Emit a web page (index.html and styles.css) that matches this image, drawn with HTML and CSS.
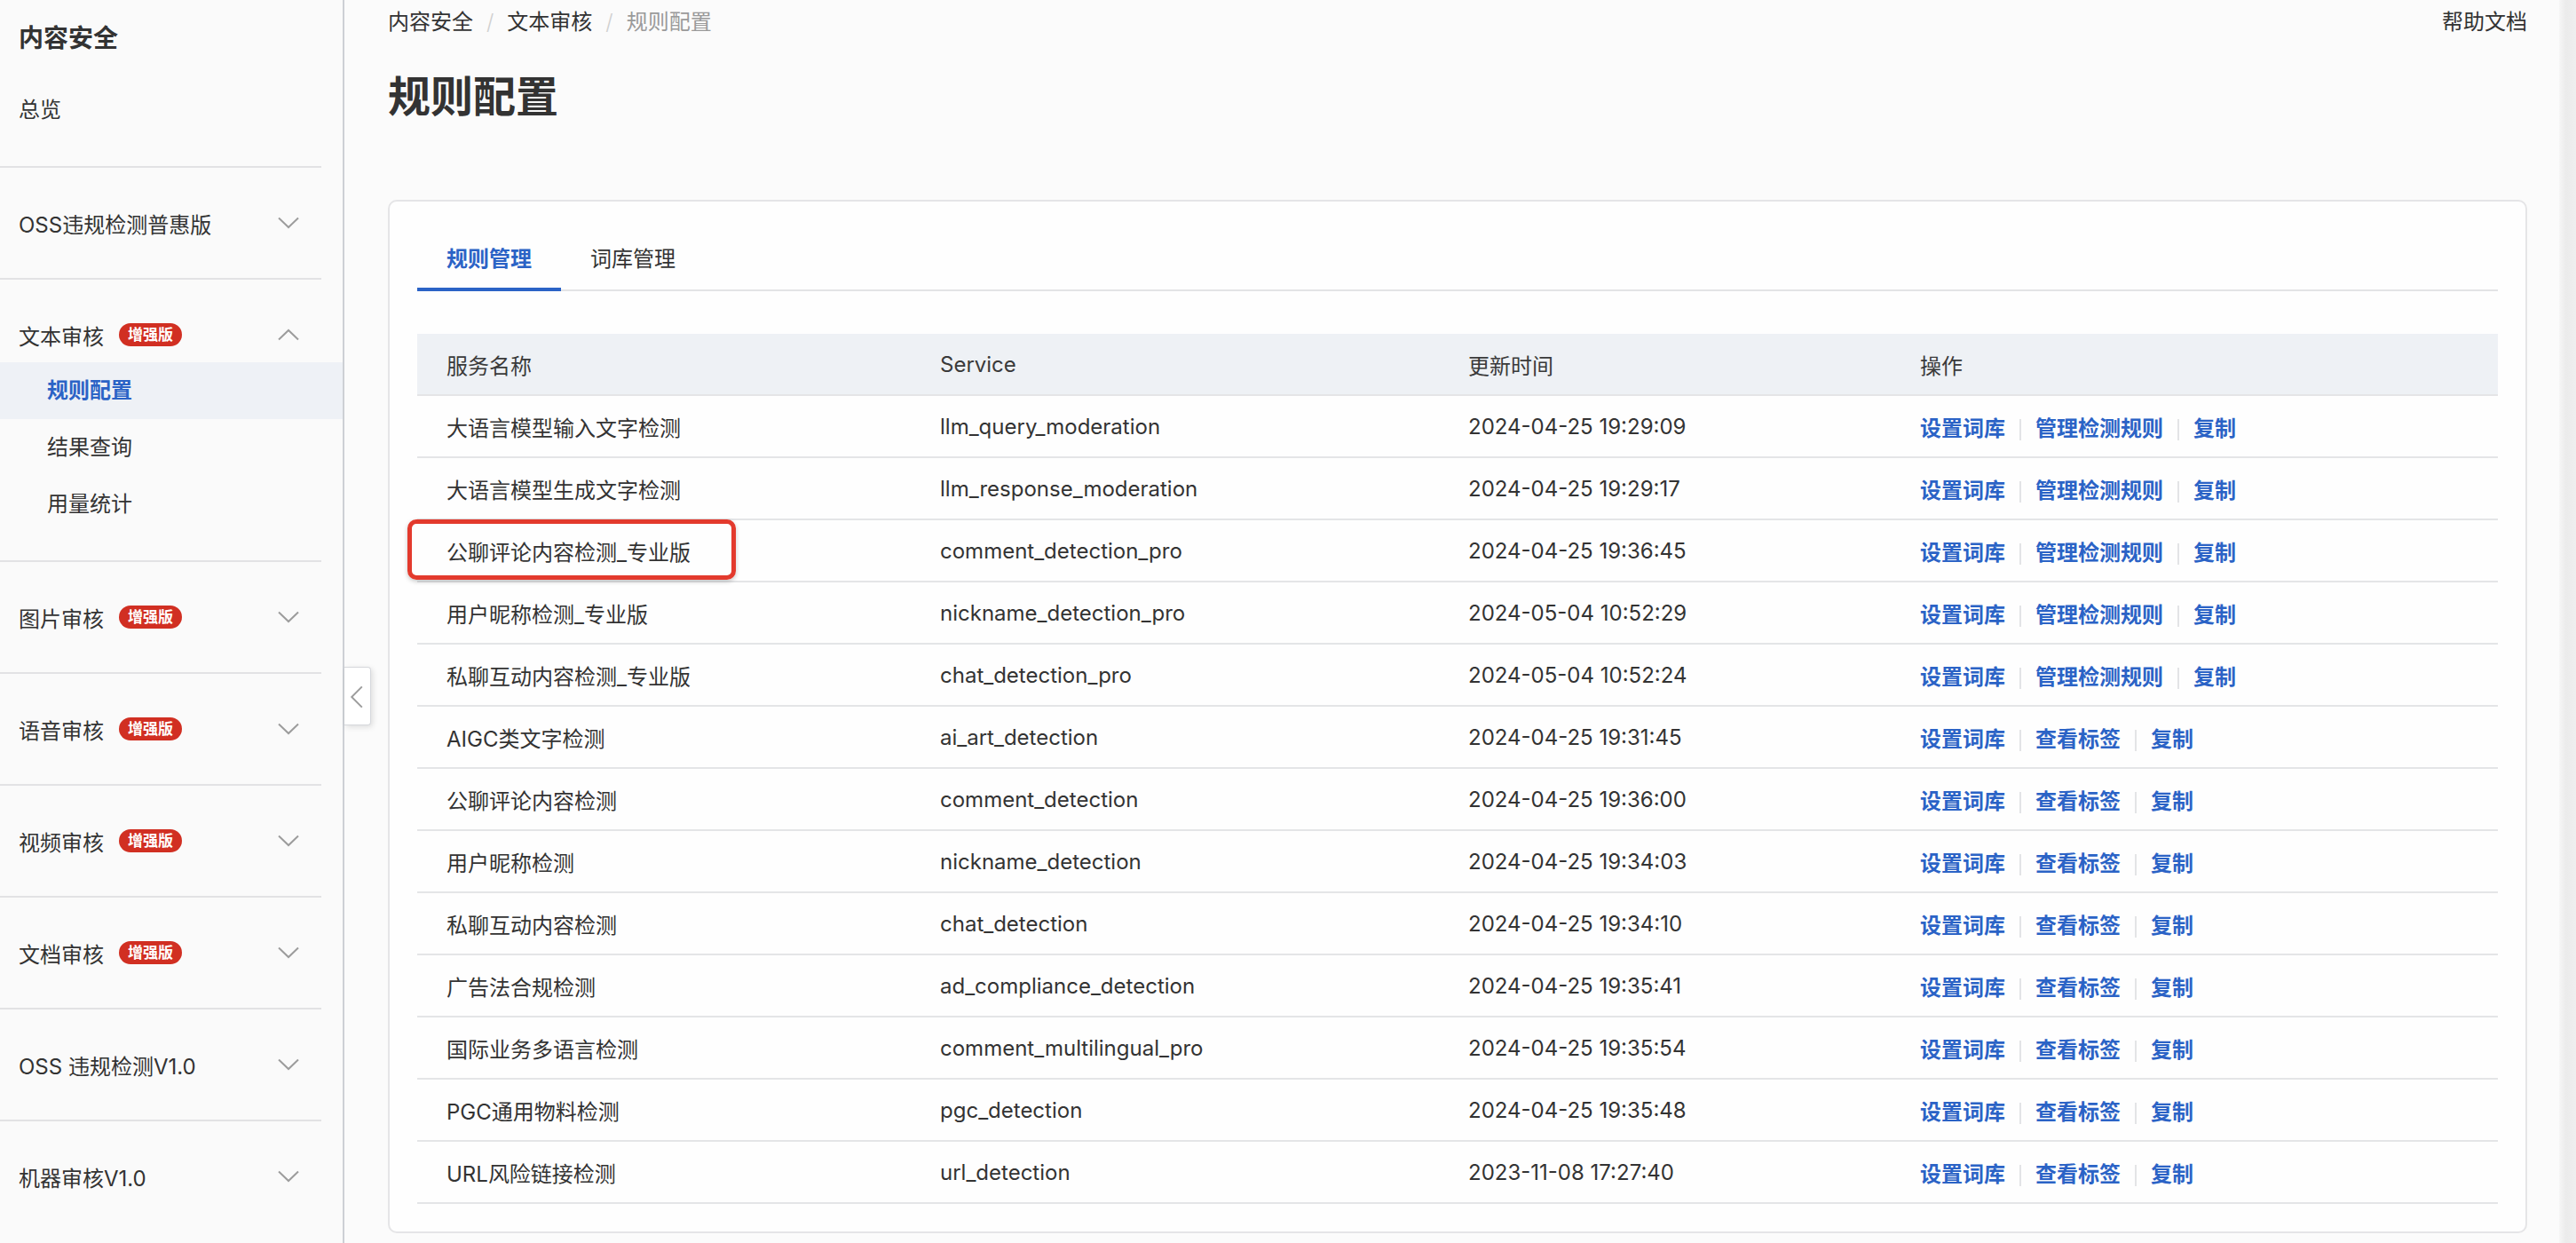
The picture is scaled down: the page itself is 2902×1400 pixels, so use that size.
FILE: index.html
```html
<!DOCTYPE html>
<html lang="zh-CN">
<head>
<meta charset="utf-8">
<title>规则配置</title>
<link rel="stylesheet" href="styles.css">
</head>
<body>
<div class="app">
  <aside class="sidebar">
    <div class="brand">内容安全</div>
    <div class="nav-group nav-group-first">
      <a class="nav-item">总览</a>
    </div>
    <div class="divider"></div>
    <div class="nav-group">
      <div class="nav-head"><span class="label">OSS违规检测普惠版</span><svg class="chev" viewBox="0 0 24 14"><path d="M1 1.5 L12 12 L23 1.5"/></svg></div>
    </div>
    <div class="divider"></div>
    <div class="nav-group">
      <div class="nav-head"><span class="label">文本审核</span><span class="badge">增强版</span><svg class="chev" viewBox="0 0 24 14"><path d="M1 12.5 L12 2 L23 12.5"/></svg></div>
      <a class="nav-sub active">规则配置</a>
      <a class="nav-sub">结果查询</a>
      <a class="nav-sub">用量统计</a>
    </div>
    <div class="divider"></div>
    <div class="nav-group">
      <div class="nav-head"><span class="label">图片审核</span><span class="badge">增强版</span><svg class="chev" viewBox="0 0 24 14"><path d="M1 1.5 L12 12 L23 1.5"/></svg></div>
    </div>
    <div class="divider"></div>
    <div class="nav-group">
      <div class="nav-head"><span class="label">语音审核</span><span class="badge">增强版</span><svg class="chev" viewBox="0 0 24 14"><path d="M1 1.5 L12 12 L23 1.5"/></svg></div>
    </div>
    <div class="divider"></div>
    <div class="nav-group">
      <div class="nav-head"><span class="label">视频审核</span><span class="badge">增强版</span><svg class="chev" viewBox="0 0 24 14"><path d="M1 1.5 L12 12 L23 1.5"/></svg></div>
    </div>
    <div class="divider"></div>
    <div class="nav-group">
      <div class="nav-head"><span class="label">文档审核</span><span class="badge">增强版</span><svg class="chev" viewBox="0 0 24 14"><path d="M1 1.5 L12 12 L23 1.5"/></svg></div>
    </div>
    <div class="divider"></div>
    <div class="nav-group">
      <div class="nav-head"><span class="label">OSS 违规检测V1.0</span><svg class="chev" viewBox="0 0 24 14"><path d="M1 1.5 L12 12 L23 1.5"/></svg></div>
    </div>
    <div class="divider"></div>
    <div class="nav-group">
      <div class="nav-head"><span class="label">机器审核V1.0</span><svg class="chev" viewBox="0 0 24 14"><path d="M1 1.5 L12 12 L23 1.5"/></svg></div>
    </div>
    <div class="collapse-btn"><svg viewBox="0 0 30 66"><path d="M20.5 22 L8.5 34 L20.5 46"/></svg></div>
  </aside>

  <main class="main">
    <div class="topbar">
      <nav class="crumbs">
        <span class="crumb">内容安全</span><span class="sep">/</span><span class="crumb">文本审核</span><span class="sep">/</span><span class="crumb current">规则配置</span>
      </nav>
      <a class="help">帮助文档</a>
    </div>
    <h1 class="title">规则配置</h1>

    <section class="card">
      <div class="tabs">
        <div class="tab active">规则管理</div>
        <div class="tab">词库管理</div>
      </div>

      <table class="rules">
        <colgroup>
          <col class="c-name"><col class="c-service"><col class="c-time"><col class="c-ops">
        </colgroup>
        <thead>
          <tr><th>服务名称</th><th>Service</th><th>更新时间</th><th>操作</th></tr>
        </thead>
        <tbody>
          <tr><td>大语言模型输入文字检测</td><td>llm_query_moderation</td><td>2024-04-25 19:29:09</td><td class="ops"><a>设置词库</a><i class="bar"></i><a>管理检测规则</a><i class="bar"></i><a>复制</a></td></tr>
          <tr><td>大语言模型生成文字检测</td><td>llm_response_moderation</td><td>2024-04-25 19:29:17</td><td class="ops"><a>设置词库</a><i class="bar"></i><a>管理检测规则</a><i class="bar"></i><a>复制</a></td></tr>
          <tr><td class="marked">公聊评论内容检测_专业版<span class="mark-box"></span></td><td>comment_detection_pro</td><td>2024-04-25 19:36:45</td><td class="ops"><a>设置词库</a><i class="bar"></i><a>管理检测规则</a><i class="bar"></i><a>复制</a></td></tr>
          <tr><td>用户昵称检测_专业版</td><td>nickname_detection_pro</td><td>2024-05-04 10:52:29</td><td class="ops"><a>设置词库</a><i class="bar"></i><a>管理检测规则</a><i class="bar"></i><a>复制</a></td></tr>
          <tr><td>私聊互动内容检测_专业版</td><td>chat_detection_pro</td><td>2024-05-04 10:52:24</td><td class="ops"><a>设置词库</a><i class="bar"></i><a>管理检测规则</a><i class="bar"></i><a>复制</a></td></tr>
          <tr><td>AIGC类文字检测</td><td>ai_art_detection</td><td>2024-04-25 19:31:45</td><td class="ops"><a>设置词库</a><i class="bar"></i><a>查看标签</a><i class="bar"></i><a>复制</a></td></tr>
          <tr><td>公聊评论内容检测</td><td>comment_detection</td><td>2024-04-25 19:36:00</td><td class="ops"><a>设置词库</a><i class="bar"></i><a>查看标签</a><i class="bar"></i><a>复制</a></td></tr>
          <tr><td>用户昵称检测</td><td>nickname_detection</td><td>2024-04-25 19:34:03</td><td class="ops"><a>设置词库</a><i class="bar"></i><a>查看标签</a><i class="bar"></i><a>复制</a></td></tr>
          <tr><td>私聊互动内容检测</td><td>chat_detection</td><td>2024-04-25 19:34:10</td><td class="ops"><a>设置词库</a><i class="bar"></i><a>查看标签</a><i class="bar"></i><a>复制</a></td></tr>
          <tr><td>广告法合规检测</td><td>ad_compliance_detection</td><td>2024-04-25 19:35:41</td><td class="ops"><a>设置词库</a><i class="bar"></i><a>查看标签</a><i class="bar"></i><a>复制</a></td></tr>
          <tr><td>国际业务多语言检测</td><td>comment_multilingual_pro</td><td>2024-04-25 19:35:54</td><td class="ops"><a>设置词库</a><i class="bar"></i><a>查看标签</a><i class="bar"></i><a>复制</a></td></tr>
          <tr><td>PGC通用物料检测</td><td>pgc_detection</td><td>2024-04-25 19:35:48</td><td class="ops"><a>设置词库</a><i class="bar"></i><a>查看标签</a><i class="bar"></i><a>复制</a></td></tr>
          <tr><td>URL风险链接检测</td><td>url_detection</td><td>2023-11-08 17:27:40</td><td class="ops"><a>设置词库</a><i class="bar"></i><a>查看标签</a><i class="bar"></i><a>复制</a></td></tr>
        </tbody>
      </table>
    </section>
  </main>
  <div class="scroll-track"></div>
</div>
</body>
</html>
```

FILE: styles.css
```css
* { box-sizing: border-box; }
html, body {
  margin: 0;
  padding: 0;
  height: 1400px;
  overflow: hidden;
}
body {
  font-family: Inter, "Noto Sans CJK SC", sans-serif;
  font-size: 24px;
  color: #333;
  background: #fbfbfb;
}
a { color: inherit; text-decoration: none; }

.app {
  display: flex;
  height: 1400px;
}

/* ---------- sidebar ---------- */
.sidebar {
  position: relative;
  flex: 0 0 388px;
  width: 388px;
  border-right: 2px solid #cdd0d5;
  background: #fafafa;
}
.brand {
  height: 86px;
  line-height: 86px;
  padding-left: 21px;
  font-size: 28px;
  font-weight: 700;
  color: #333;
}
.nav-group { padding: 31px 0; }
.nav-group-first { padding-top: 6px; }
.nav-item {
  display: block;
  height: 64px;
  line-height: 64px;
  padding-left: 21px;
}
.divider {
  height: 2px;
  margin-right: 24px;
  background: #e2e2e4;
}
.nav-head {
  display: flex;
  align-items: center;
  height: 62px;
  padding: 0 49px 0 21px;
}
.nav-head .label { white-space: nowrap; }
.badge {
  margin-left: 17px;
  height: 26px;
  line-height: 26px;
  padding: 0 10px;
  border-radius: 13px;
  background: #d12f22;
  color: #fff;
  font-size: 17px;
  font-weight: 700;
}
.chev {
  margin-left: auto;
  width: 24px;
  height: 14px;
  fill: none;
  stroke: #9c9c9c;
  stroke-width: 2;
}
.nav-sub {
  display: block;
  height: 64px;
  line-height: 64px;
  padding-left: 53px;
  color: #333;
}
.nav-sub.active {
  background: #eef1f6;
  color: #2b63c6;
  font-weight: 700;
}
.collapse-btn {
  position: absolute;
  left: 100%;
  margin-left: 2px;
  top: 751px;
  width: 30px;
  height: 66px;
  background: #fff;
  border: 1px solid #d6d8dc;
  border-left: none;
  border-radius: 0 4px 4px 0;
  box-shadow: 2px 2px 6px rgba(0, 0, 0, 0.12);
}
.collapse-btn svg {
  display: block;
  width: 29px;
  height: 64px;
  fill: none;
  stroke: #9c9c9c;
  stroke-width: 2;
}

/* ---------- main ---------- */
.main {
  flex: 1 1 auto;
  min-width: 0;
  padding: 8px 36px 0 49px;
  background: #fbfbfb;
}
.topbar {
  display: flex;
  justify-content: space-between;
  align-items: center;
  height: 34px;
  line-height: 34px;
}
.crumbs { display: flex; align-items: center; }
.crumb { color: #333; }
.crumb.current { color: #9a9a9a; }
.sep {
  margin: 0 15px;
  color: #d0d0d0;
  font-weight: 300;
}
.help { color: #333; }

.title {
  margin: 35px 0 0;
  height: 64px;
  line-height: 64px;
  font-size: 48px;
  font-weight: 700;
  color: #333;
}

.card {
  margin-top: 84px;
  border: 2px solid #e5e5e7;
  border-radius: 10px;
  background: #fefefe;
  padding: 48px 31px 31px;
}

.tabs {
  display: flex;
  border-bottom: 2px solid #e3e4e6;
}
.tab {
  padding: 0 33px 15px;
  line-height: 34px;
  margin-bottom: -2px;
  border-bottom: 4px solid transparent;
  color: #333;
}
.tab.active {
  color: #2b63c6;
  font-weight: 700;
  border-bottom-color: #2b63c6;
}

.rules {
  width: 100%;
  margin-top: 48px;
  border-collapse: separate;
  border-spacing: 0;
  table-layout: fixed;
}
.c-name { width: 556px; }
.c-service { width: 595px; }
.c-time { width: 509px; }
.c-ops { width: auto; }

.rules th,
.rules td {
  height: 70px;
  padding: 0 0 0 33px;
  text-align: left;
  vertical-align: middle;
  white-space: nowrap;
  border-bottom: 2px solid #e4e5e7;
}
.rules th {
  background: #eef1f5;
  font-weight: 400;
  color: #3a3a3a;
}
.rules td { color: #333; }

.ops a {
  color: #2b63c6;
  font-weight: 700;
}
.bar {
  display: inline-block;
  width: 2px;
  height: 24px;
  margin: 0 16px;
  vertical-align: middle;
  background: #e3e4e6;
}

.marked { position: relative; }
.mark-box {
  position: absolute;
  left: -11px;
  top: -1px;
  width: 370px;
  height: 68px;
  border: 5px solid #e33a2d;
  border-radius: 10px;
  box-shadow: 0 2px 5px rgba(0, 0, 0, 0.22);
}

.scroll-track {
  flex: 0 0 19px;
  background: linear-gradient(to right, #f6f6f6, #ebebeb 40%, #efefef);
}
```
